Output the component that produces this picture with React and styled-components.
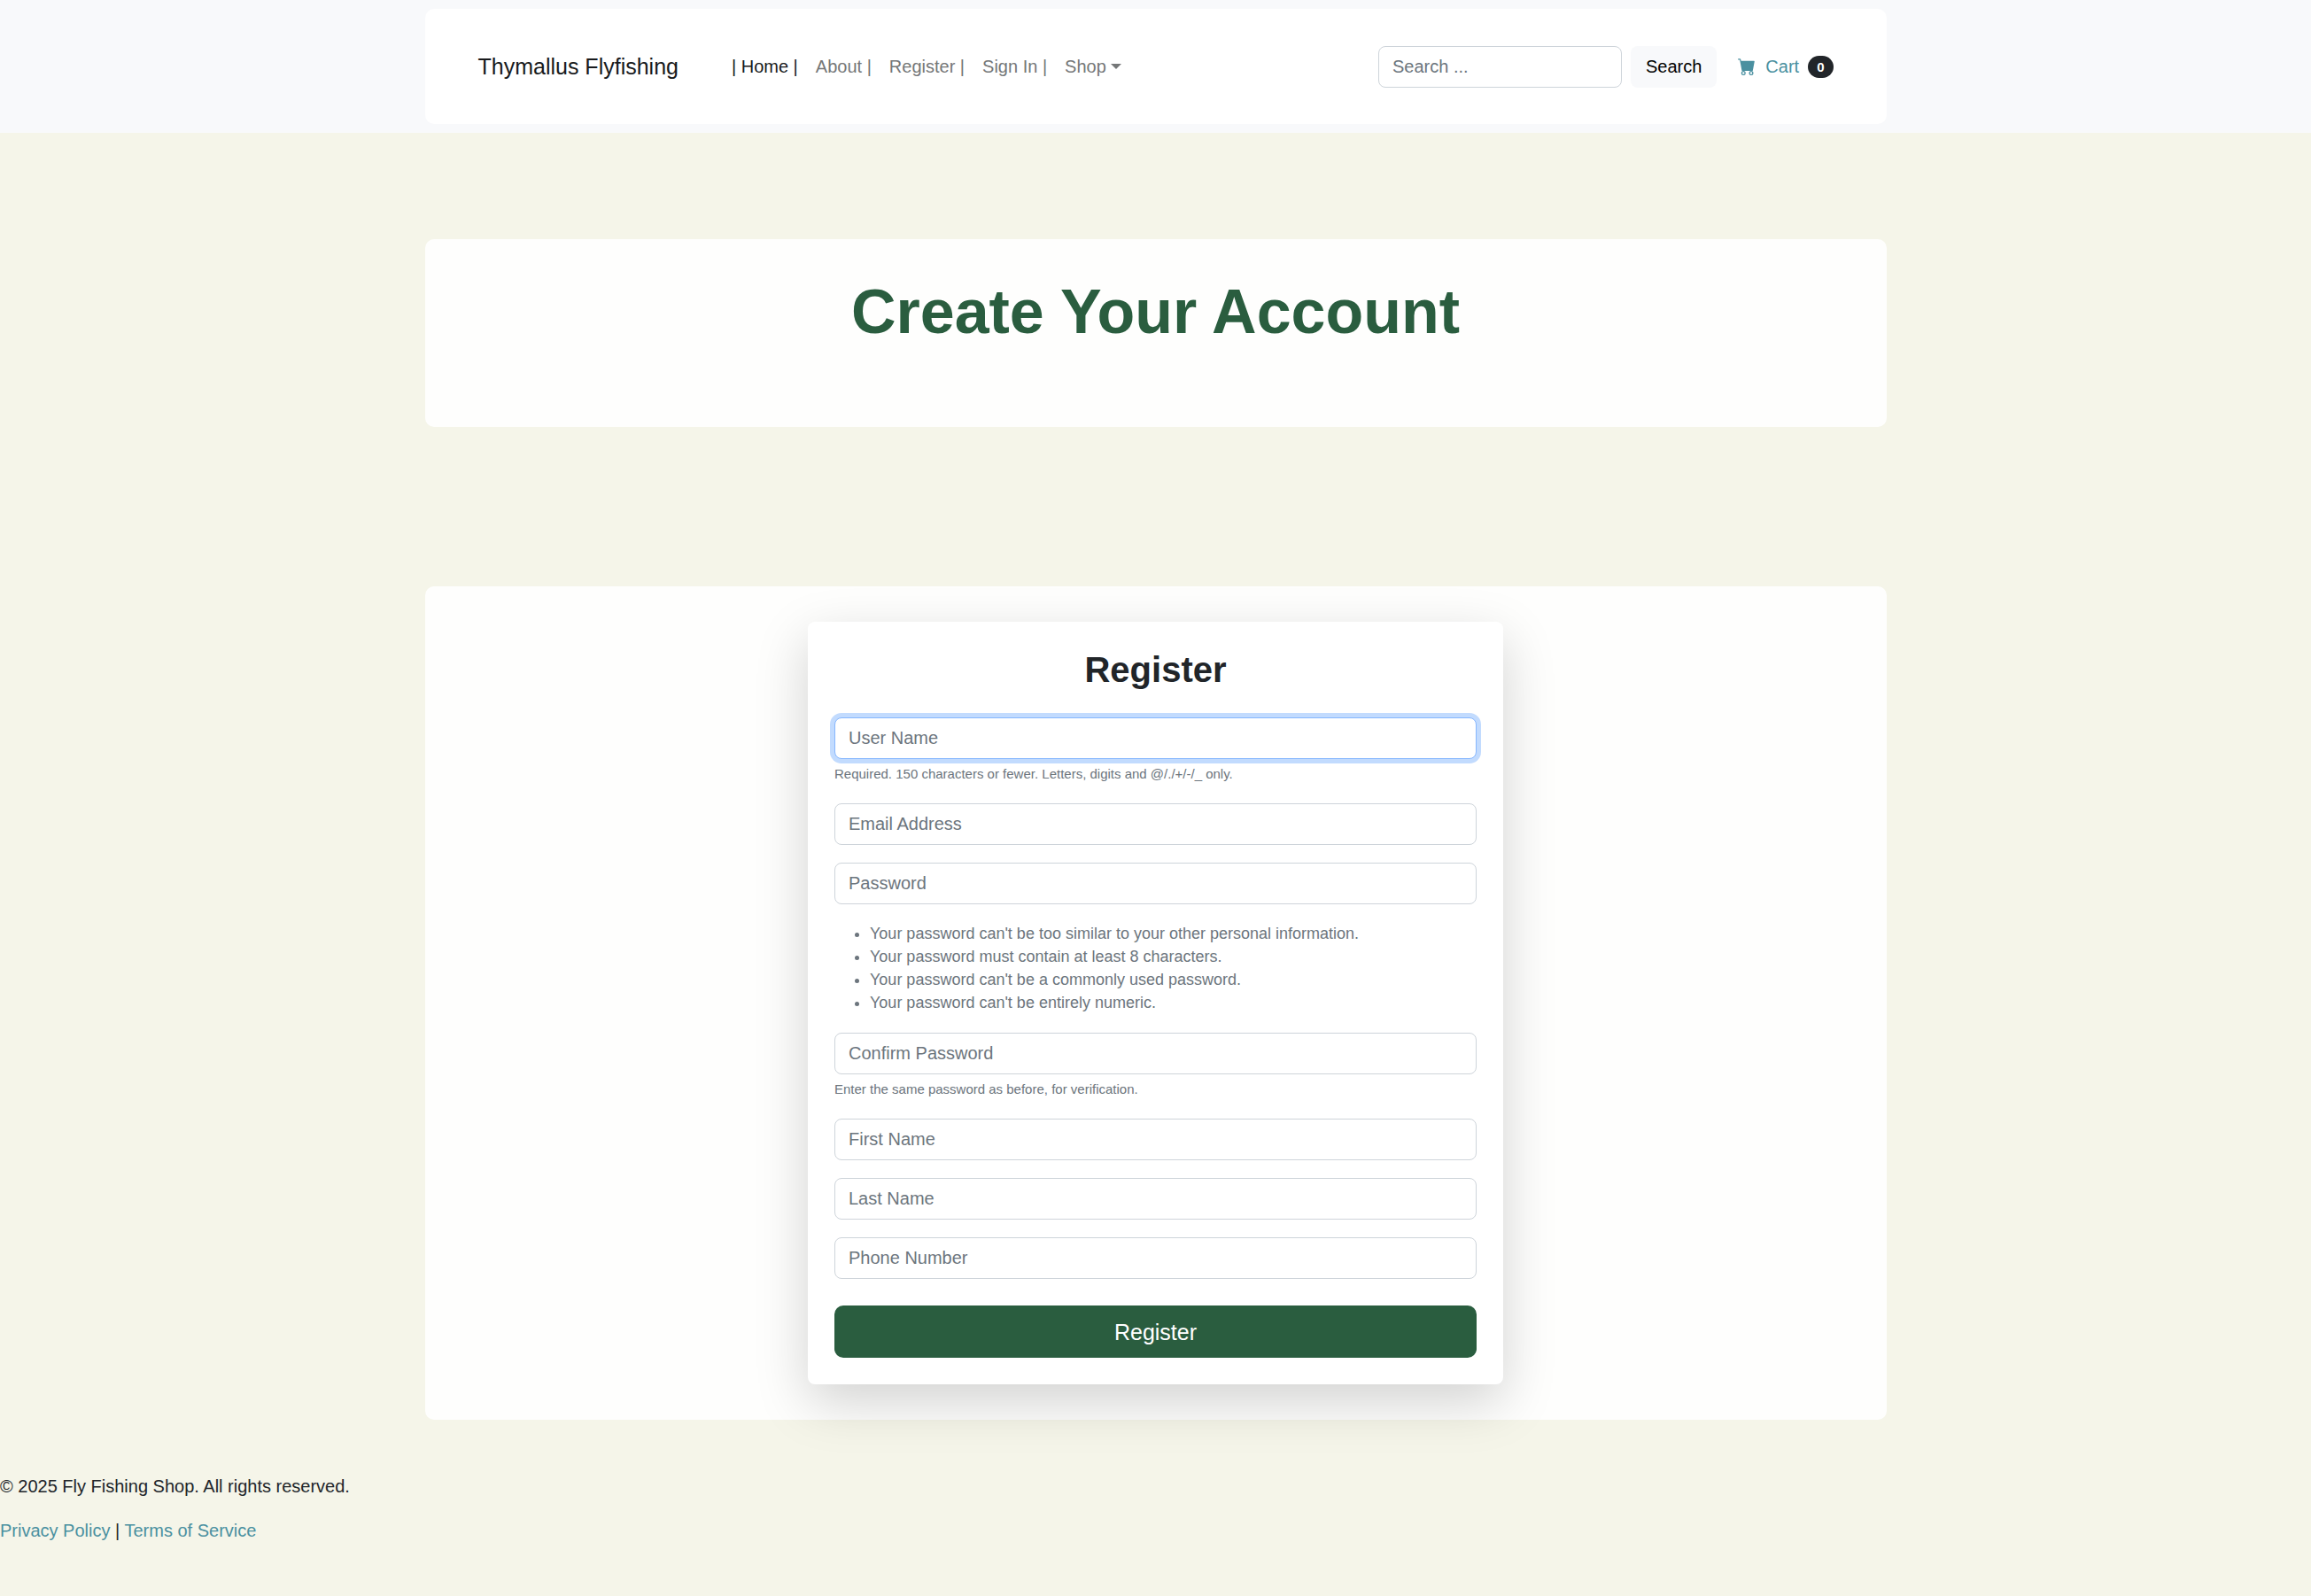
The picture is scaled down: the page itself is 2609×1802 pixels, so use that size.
import React from "react";
import styled, { createGlobalStyle } from "styled-components";

const GlobalStyle = createGlobalStyle`
  *, *::before, *::after { box-sizing: border-box; }
  body {
    margin: 0;
    background: #f5f5e9;
    color: #212529;
    font-family: Arial, "Liberation Sans", sans-serif;
    font-size: 20px;
    line-height: 30px;
  }
  a { color: #4a90a0; text-decoration: none; }
`;

const Container = styled.div`
  width: 100%;
  max-width: 1650px;
  margin: 0 auto;
  border-radius: 10px;
  background: rgba(255, 255, 255, 0.9);
`;

const Navbar = styled.header`
  padding: 10px 0;
  background: #f8f9fb;
`;

const NavInner = styled(Container)`
  display: flex;
  align-items: center;
  min-height: 130px;
  padding: 40px 60px;
`;

const Brand = styled.a`
  margin-right: 60px;
  color: #181a1c;
  font-size: 25px;
  line-height: 38px;
`;

const NavList = styled.nav`
  display: flex;
  flex: 1;
  gap: 20px;
`;

const NavLink = styled.a`
  color: ${(p) => (p.$active ? "#181a1c" : "#757778")};
`;

const ShopButton = styled.button`
  display: inline-flex;
  align-items: center;
  gap: 5px;
  padding: 0;
  border: 0;
  background: none;
  color: #757778;
  font: inherit;
`;

const Caret = styled.span`
  border-top: 6px solid currentColor;
  border-left: 6px solid transparent;
  border-right: 6px solid transparent;
`;

const SearchForm = styled.form`
  display: flex;
  gap: 10px;
`;

const Control = styled.input`
  display: block;
  width: 100%;
  height: 47px;
  padding: 0 15px;
  border: 1px solid #ced4da;
  border-radius: 8px;
  background: #fff;
  color: #212529;
  font: inherit;
  outline: 0;
  &::placeholder { color: #6c757d; opacity: 1; }
  &:focus {
    border-color: #86b7fe;
    box-shadow: 0 0 0 5px rgba(13, 110, 253, 0.25);
  }
`;

const SearchInput = styled(Control)`
  width: 275px;
`;

const SearchButton = styled.button`
  padding: 0 17px;
  border: 0;
  border-radius: 8px;
  background: #f8f9fb;
  color: #000;
  font: inherit;
`;

const CartLink = styled.a`
  display: flex;
  align-items: center;
  margin-left: 24px;
`;

const CartLabel = styled.span`
  margin: 0 10px 0 11px;
`;

const Badge = styled.span`
  padding: 5px 10px;
  border-radius: 13px;
  background: #212529;
  color: #fff;
  font-size: 15px;
  font-weight: 700;
  line-height: 15px;
`;

const Hero = styled(Container)`
  margin-top: 120px;
  padding: 40px 60px 88px;
  text-align: center;
`;

const HeroTitle = styled.h1`
  margin: 0;
  color: #2a5d3f;
  font-size: 70px;
  font-weight: 700;
  line-height: 84px;
`;

const FormSection = styled(Container)`
  display: flex;
  justify-content: center;
  margin-top: 180px;
  padding: 40px 15px;
`;

const Card = styled.form`
  width: 100%;
  max-width: 785px;
  padding: 30px;
  border-radius: 8px;
  background: #fff;
  box-shadow: 0 20px 60px rgba(0, 0, 0, 0.175);
`;

const CardTitle = styled.h2`
  margin: 0 0 30px;
  font-size: 40px;
  font-weight: 700;
  line-height: 48px;
  text-align: center;
`;

const Field = styled.div`
  margin-bottom: 20px;
`;

const Label = styled.label`
  display: block;
`;

const Hint = styled.p`
  margin: 5px 0 22px;
  color: #6c757d;
  font-size: 15px;
  line-height: 23px;
`;

const Rules = styled.ul`
  margin: 20px 0 21px;
  padding-left: 40px;
  color: #6c757d;
  font-size: 18px;
  line-height: 26px;
`;

const Submit = styled.button`
  display: block;
  width: 100%;
  height: 59px;
  margin-top: 30px;
  border: 0;
  border-radius: 10px;
  background: #2a5d3f;
  color: #fff;
  font: inherit;
  font-size: 25px;
`;

const Footer = styled.footer`
  margin-top: 60px;
  padding-bottom: 60px;
`;

const FooterLine = styled.p`
  margin: 0 0 20px;
`;

const rules = [
  "Your password can't be too similar to your other personal information.",
  "Your password must contain at least 8 characters.",
  "Your password can't be a commonly used password.",
  "Your password can't be entirely numeric.",
];

const fields = [
  { id: "username", label: "User Name", hint: "Required. 150 characters or fewer. Letters, digits and @/./+/-/_ only.", autoFocus: true },
  { id: "email", label: "Email Address", type: "email" },
  { id: "password1", label: "Password", type: "password", rules },
  { id: "password2", label: "Confirm Password", type: "password", hint: "Enter the same password as before, for verification." },
  { id: "first-name", label: "First Name" },
  { id: "last-name", label: "Last Name" },
  { id: "phone", label: "Phone Number", type: "tel" },
];

function FormField({ id, label, type = "text", hint, rules, autoFocus }) {
  return (
    <Field>
      <Label htmlFor={id}>
        <Control id={id} type={type} placeholder={label} aria-label={label} autoFocus={autoFocus} />
      </Label>
      {hint && <Hint>{hint}</Hint>}
      {rules && (
        <Rules>
          {rules.map((rule) => <li key={rule}>{rule}</li>)}
        </Rules>
      )}
    </Field>
  );
}

function CartIcon() {
  return (
    <svg width="20" height="20" viewBox="0 0 16 16" fill="currentColor" aria-hidden="true">
      <path d="M0 1.5A.5.5 0 0 1 .5 1H2a.5.5 0 0 1 .485.379L2.89 3H14.5a.5.5 0 0 1 .491.592l-1.5 8A.5.5 0 0 1 13 12H4a.5.5 0 0 1-.491-.408L2.01 3.607 1.61 2H.5a.5.5 0 0 1-.5-.5zM5 12a2 2 0 1 0 0 4 2 2 0 0 0 0-4zm7 0a2 2 0 1 0 0 4 2 2 0 0 0 0-4zm-7 1a1 1 0 1 1 0 2 1 1 0 0 1 0-2zm7 0a1 1 0 1 1 0 2 1 1 0 0 1 0-2z" />
    </svg>
  );
}

export default function App() {
  return (
    <>
      <GlobalStyle />
      <Navbar>
        <NavInner>
          <Brand href="#">Thymallus Flyfishing</Brand>
          <NavList>
            <NavLink href="#" $active>| Home |</NavLink>
            <NavLink href="#">About |</NavLink>
            <NavLink href="#">Register |</NavLink>
            <NavLink href="#">Sign In |</NavLink>
            <ShopButton type="button">Shop<Caret /></ShopButton>
          </NavList>
          <SearchForm>
            <SearchInput type="search" placeholder="Search ..." aria-label="Search" />
            <SearchButton type="submit">Search</SearchButton>
          </SearchForm>
          <CartLink href="#">
            <CartIcon />
            <CartLabel>Cart</CartLabel>
            <Badge>0</Badge>
          </CartLink>
        </NavInner>
      </Navbar>
      <main>
        <Hero>
          <HeroTitle>Create Your Account</HeroTitle>
        </Hero>
        <FormSection>
          <Card>
            <CardTitle>Register</CardTitle>
            {fields.map((field) => <FormField key={field.id} {...field} />)}
            <Submit type="submit">Register</Submit>
          </Card>
        </FormSection>
      </main>
      <Footer>
        <FooterLine>© 2025 Fly Fishing Shop. All rights reserved.</FooterLine>
        <FooterLine><a href="#">Privacy Policy</a> | <a href="#">Terms of Service</a></FooterLine>
      </Footer>
    </>
  );
}
